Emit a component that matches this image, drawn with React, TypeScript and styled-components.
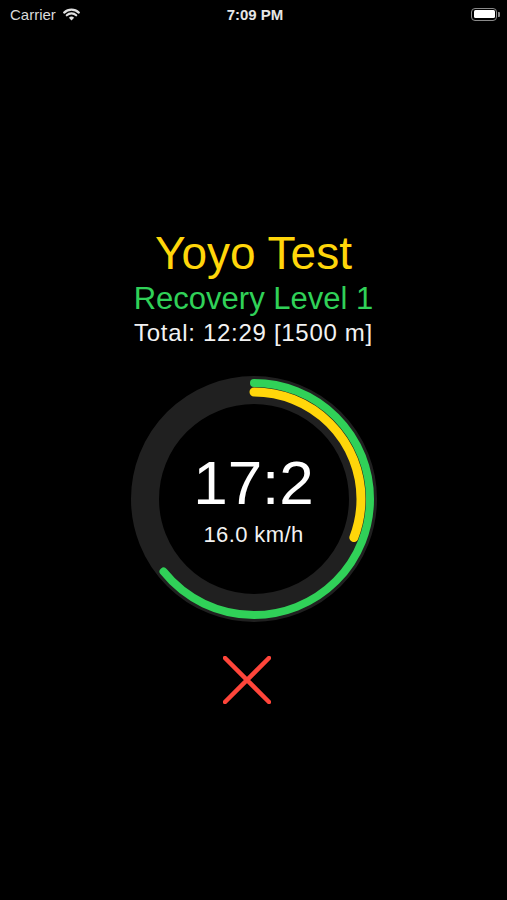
import { Fragment } from 'react'
import styled, { createGlobalStyle } from 'styled-components'

const GlobalStyle = createGlobalStyle`
  * {
    margin: 0;
    padding: 0;
    box-sizing: border-box;
  }

  html, body {
    background-color: #000000;
  }

  body {
    font-family: 'Liberation Sans', Arial, sans-serif;
    color: #ffffff;
  }
`

const Tela = styled.div`
  width: 507px;
  height: 900px;
  display: flex;
  flex-direction: column;
  background-color: #000000;
`

const BarraStatus = styled.div`
  height: 28px;
  display: grid;
  grid-template-columns: 1fr auto 1fr;
  align-items: center;
  padding: 0 7px 0 10px;
  font-size: 15px;
  color: #dadada;
`

const Operadora = styled.div`
  display: flex;
  align-items: center;
  gap: 7px;
`

const Hora = styled.div`
  font-weight: 600;
  color: #e6e6e6;
`

const Bateria = styled.div`
  justify-self: end;
  display: flex;
  align-items: center;
`

const BateriaCorpo = styled.div`
  width: 26px;
  height: 13px;
  border: 1.5px solid #8a8a8a;
  border-radius: 4px;
  padding: 1.5px;
  display: flex;
`

const BateriaCarga = styled.div`
  flex: 1;
  background-color: #ffffff;
  border-radius: 1.5px;
`

const BateriaPonta = styled.div`
  width: 2px;
  height: 5px;
  margin-left: 1px;
  background-color: #8a8a8a;
  border-radius: 0 1px 1px 0;
`

const Conteudo = styled.main`
  display: flex;
  flex-direction: column;
  align-items: center;
  padding-top: 202px;
`

const Titulo = styled.h1`
  font-size: 46px;
  line-height: 46px;
  font-weight: normal;
  color: #ffd60a;
`

const Subtitulo = styled.h2`
  margin-top: 7px;
  font-size: 31px;
  line-height: 31px;
  font-weight: normal;
  color: #30d158;
`

const Total = styled.p`
  margin-top: 7px;
  font-size: 24px;
  line-height: 24px;
  letter-spacing: 0.7px;
  color: #f2f2f2;
`

const Relogio = styled.div`
  position: relative;
  margin-top: 31px;
  width: 246px;
  height: 246px;
  display: flex;
  flex-direction: column;
  align-items: center;
  justify-content: center;
`

const Aneis = styled.svg`
  position: absolute;
  inset: 0;
`

const Tempo = styled.div`
  position: relative;
  font-size: 62px;
  line-height: 62px;
  color: #ffffff;
`

const Velocidade = styled.div`
  position: relative;
  margin-top: 10px;
  font-size: 22px;
  line-height: 22px;
  letter-spacing: 0.4px;
  color: #f2f2f2;
`

const BotaoParar = styled.button`
  margin: 34px 14px 0 0;
  width: 48px;
  height: 48px;
  border: none;
  background: none;
  cursor: pointer;
  display: flex;
`

const arco = (raio: number, graus: number) => {
  const circ = 2 * Math.PI * raio
  return `${(circ * graus) / 360} ${circ}`
}

function Wifi() {
  return (
    <svg width="17" height="13" viewBox="0 0 17 13">
      <path d="M1.2 4.6 A10.5 10.5 0 0 1 15.8 4.6" stroke="#e0e0e0" strokeWidth="2.2" fill="none" strokeLinecap="round" />
      <path d="M3.8 7.3 A6.7 6.7 0 0 1 13.2 7.3" stroke="#e0e0e0" strokeWidth="2.2" fill="none" strokeLinecap="round" />
      <path d="M8.5 12.4 L5.9 9.7 A3.7 3.7 0 0 1 11.1 9.7 Z" fill="#e0e0e0" />
    </svg>
  )
}

function App() {
  return (
    <Fragment>
      <GlobalStyle />
      <Tela>
        <BarraStatus>
          <Operadora>
            Carrier
            <Wifi />
          </Operadora>
          <Hora>7:09 PM</Hora>
          <Bateria>
            <BateriaCorpo>
              <BateriaCarga />
            </BateriaCorpo>
            <BateriaPonta />
          </Bateria>
        </BarraStatus>

        <Conteudo>
          <Titulo>Yoyo Test</Titulo>
          <Subtitulo>Recovery Level 1</Subtitulo>
          <Total>Total: 12:29 [1500 m]</Total>

          <Relogio>
            <Aneis width="246" height="246" viewBox="0 0 246 246">
              <circle cx="123" cy="123" r="109" stroke="#202020" strokeWidth="28" fill="none" />
              <circle
                cx="123"
                cy="123"
                r="116"
                stroke="#30d158"
                strokeWidth="8"
                fill="none"
                strokeLinecap="round"
                strokeDasharray={arco(116, 231)}
                transform="rotate(-90 123 123)"
              />
              <circle
                cx="123"
                cy="123"
                r="107"
                stroke="#ffd60a"
                strokeWidth="9"
                fill="none"
                strokeLinecap="round"
                strokeDasharray={arco(107, 111)}
                transform="rotate(-90 123 123)"
              />
            </Aneis>
            <Tempo>17:2</Tempo>
            <Velocidade>16.0 km/h</Velocidade>
          </Relogio>

          <BotaoParar aria-label="Parar">
            <svg width="48" height="48" viewBox="0 0 48 48">
              <path d="M2 2 L46 46 M46 2 L2 46" stroke="#ff453a" strokeWidth="4.5" strokeLinecap="round" />
            </svg>
          </BotaoParar>
        </Conteudo>
      </Tela>
    </Fragment>
  )
}

export default App
